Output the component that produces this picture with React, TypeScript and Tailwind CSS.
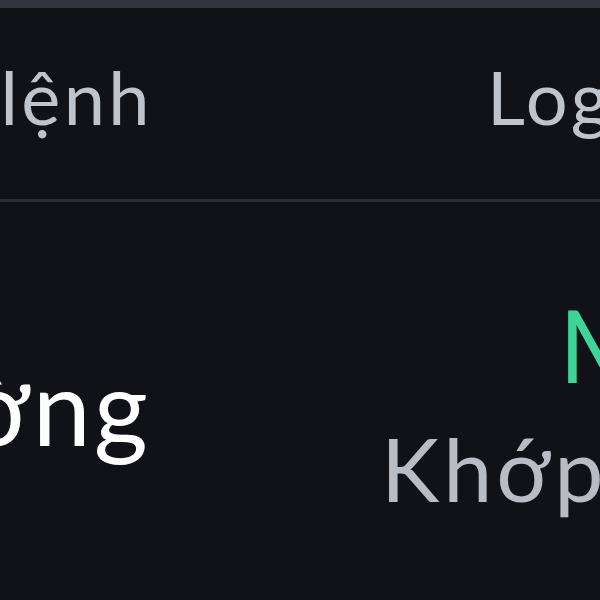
export default function App() {
  return (
    <div
      className="w-[600px] h-[600px] overflow-hidden bg-[#111218] flex flex-col"
      style={{ fontFamily: "Lato, 'Noto Sans', sans-serif" }}
    >
      <div className="h-[8px] bg-[#33363e] shrink-0" />
      <div className="h-[191px] shrink-0 flex items-center relative">
        <div className="w-[153px] flex justify-end shrink-0">
          <span className="whitespace-nowrap text-[74px] leading-none tracking-[0.045em] text-[#bfc3cb] mt-[-14px]">Sổ lệnh</span>
        </div>
        <div className="ml-[334px] shrink-0">
          <span className="whitespace-nowrap text-[74px] leading-none tracking-[0.045em] text-[#bfc3cb] mt-[-14px] block">Logs</span>
        </div>
      </div>
      <div className="h-[3px] bg-[#272b35] shrink-0" />
      <div className="flex-1 flex">
        <div className="w-[151px] flex justify-end shrink-0 items-center">
          <span className="whitespace-nowrap text-[104px] leading-none tracking-[0.03em] text-white mt-[10px]">Thường</span>
        </div>
        <div className="ml-[230px] flex flex-col shrink-0">
          <span className="whitespace-nowrap text-[100px] leading-none text-[#3ed598] ml-[178px] mt-[92px]">MUA</span>
          <span className="whitespace-nowrap text-[88px] leading-none tracking-[0.045em] text-[#b8bcc5] mt-[30px]">Khớp lệnh</span>
        </div>
      </div>
    </div>
  );
}
